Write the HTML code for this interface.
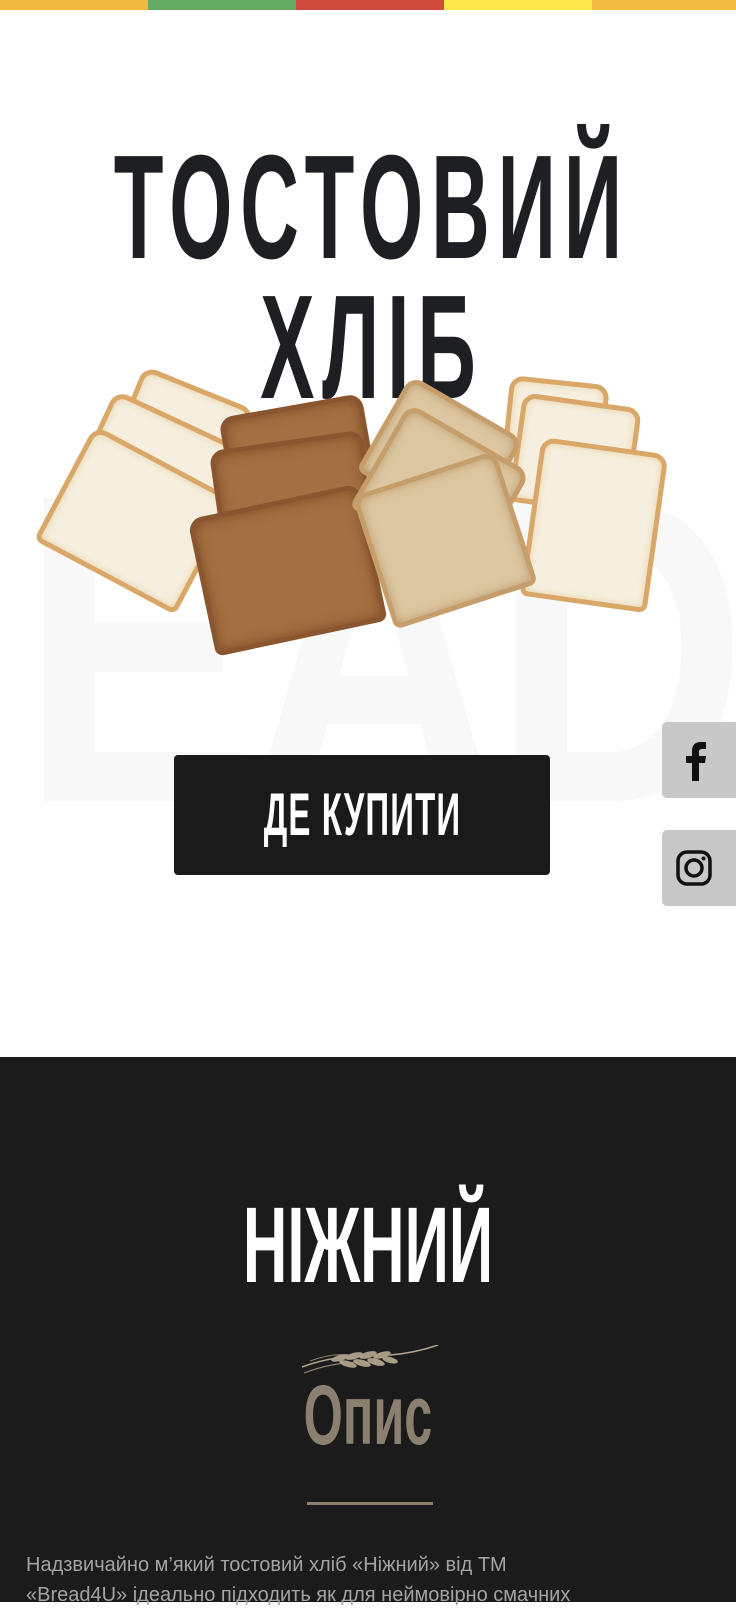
<!DOCTYPE html>
<html><head><meta charset="utf-8"><style>
*{margin:0;padding:0;box-sizing:border-box}
body{width:736px;height:1602px;overflow:hidden;background:#fff;font-family:"Liberation Sans",sans-serif;position:relative}
.bar{position:absolute;top:0;height:10px}
.t{position:absolute;left:0;width:736px;font-weight:bold;color:#1d1f22;white-space:nowrap}
.t span{position:absolute;left:50%;top:0}
.s{position:absolute;border-radius:14px 14px 8px 8px}
.w{background:#f6efdf;border:5px solid #d9a767;box-shadow:inset 0 0 8px #e8d2a8}
.b{background:#a46f42;border:5px solid #8a5630;box-shadow:inset 0 0 12px #7d4c27}
.l{background:#dcc7a2;border:5px solid #c69e6c;box-shadow:inset 0 0 10px #bf9b6c}
.soc{position:absolute;left:662px;width:80px;height:76px;background:#c8c8c8;border-radius:5px}
</style></head><body>
<div class="bar" style="left:0;width:148px;background:#f2b942"></div>
<div class="bar" style="left:148px;width:148px;background:#64aa63"></div>
<div class="bar" style="left:296px;width:148px;background:#d04b3e"></div>
<div class="bar" style="left:444px;width:148px;background:#fde84c"></div>
<div class="bar" style="left:592px;width:144px;background:#f1bb41"></div>
<div style="position:absolute;left:20px;top:430px;font:bold 440px/1 'Liberation Sans',sans-serif;color:#f8f8f8;letter-spacing:-10px;transform:scaleX(0.8);transform-origin:left">EAD</div>
<div class="t" style="top:128px;font-size:148px;line-height:160px"><span style="transform:translateX(-50%) scaleX(0.55);letter-spacing:14px;padding-left:14px">ТОСТОВИЙ</span></div>
<div class="t" style="top:268px;font-size:148px;line-height:160px"><span style="transform:translateX(-50%) scaleX(0.55);letter-spacing:14px;padding-left:14px">ХЛІБ</span></div>
<!-- bread -->
<div class="s w" style="left:125px;top:385px;width:120px;height:80px;transform:rotate(22deg)"></div>
<div class="s w" style="left:90px;top:415px;width:140px;height:90px;transform:rotate(25deg)"></div>
<div class="s w" style="left:55px;top:455px;width:160px;height:130px;transform:rotate(28deg)"></div>
<div class="s w" style="left:505px;top:380px;width:100px;height:100px;transform:rotate(6deg)"></div>
<div class="s w" style="left:515px;top:400px;width:120px;height:110px;transform:rotate(8deg)"></div>
<div class="s w" style="left:530px;top:445px;width:128px;height:160px;transform:rotate(8deg)"></div>
<div class="s b" style="left:225px;top:405px;width:145px;height:90px;transform:rotate(-10deg)"></div>
<div class="s b" style="left:215px;top:440px;width:155px;height:100px;transform:rotate(-8deg)"></div>
<div class="s b" style="left:200px;top:500px;width:175px;height:140px;transform:rotate(-12deg)"></div>
<div class="s l" style="left:375px;top:400px;width:130px;height:110px;transform:rotate(30deg)"></div>
<div class="s l" style="left:370px;top:430px;width:140px;height:120px;transform:rotate(30deg)"></div>
<div class="s l" style="left:370px;top:470px;width:150px;height:140px;transform:rotate(-18deg)"></div>
<div style="position:absolute;left:174px;top:755px;width:376px;height:120px;background:#1a1a1a;border-radius:4px;color:#fff;text-align:center;font-weight:bold;font-size:60px;line-height:120px;white-space:nowrap"><span style="display:inline-block;transform:scaleX(0.55);letter-spacing:2px">ДЕ КУПИТИ</span></div>
<div class="soc" style="top:722px"><svg width="76" height="76" viewBox="0 0 76 76" style="position:absolute;left:-6px"><path d="M36 59V41h-6v-7h6v-5c0-6 3-9 9-9h5v7h-4c-2 0-3 1-3 3v4h7l-1 7h-6v18z" fill="#111"/></svg></div>
<div class="soc" style="top:830px"><svg width="76" height="76" viewBox="0 0 76 76" style="position:absolute;left:-6px"><rect x="22" y="22" width="32" height="32" rx="9" fill="none" stroke="#111" stroke-width="3.5"/><circle cx="38" cy="38" r="8" fill="none" stroke="#111" stroke-width="3.5"/><circle cx="47.5" cy="28.5" r="2" fill="#111"/></svg></div>
<div style="position:absolute;left:0;top:1057px;width:736px;height:545px;background:#1b1b1b"></div>
<div class="t" style="top:1190px;font-size:108px;line-height:110px;color:#fff"><span style="transform:translateX(-50%) scaleX(0.57)">НІЖНИЙ</span></div>
<svg style="position:absolute;left:300px;top:1345px" width="140" height="30" viewBox="0 0 140 30"><path d="M2 22 Q40 8 90 10 Q115 8 138 0" fill="none" stroke="#b0a48f" stroke-width="1.5"/><path d="M4 28 Q40 14 80 18" fill="none" stroke="#8b8070" stroke-width="1.2"/><path d="M10 16 Q30 8 50 10" fill="none" stroke="#8b8070" stroke-width="1"/><g fill="#a89c86"><ellipse cx="40" cy="13" rx="9" ry="3" transform="rotate(-15 40 13)"/><ellipse cx="54" cy="11" rx="9" ry="3.2" transform="rotate(-15 54 11)"/><ellipse cx="68" cy="10" rx="9" ry="3.2" transform="rotate(-15 68 10)"/><ellipse cx="82" cy="10" rx="9" ry="3" transform="rotate(-15 82 10)"/><ellipse cx="48" cy="19" rx="9" ry="3" transform="rotate(15 48 19)"/><ellipse cx="62" cy="18" rx="9" ry="3.2" transform="rotate(15 62 18)"/><ellipse cx="76" cy="17" rx="9" ry="3.2" transform="rotate(15 76 17)"/><ellipse cx="90" cy="15" rx="8" ry="3" transform="rotate(15 90 15)"/></g></svg>
<div class="t" style="top:1373px;font-size:84px;line-height:84px;color:#8b8070"><span style="transform:translateX(-50%) scaleX(0.6)">Опис</span></div>
<div style="position:absolute;left:307px;top:1502px;width:126px;height:3px;background:#8b8070"></div>
<div style="position:absolute;left:26px;top:1550px;width:720px;font-size:20px;line-height:30px;color:#a3a3a3;white-space:nowrap">Надзвичайно м’який тостовий хліб «Ніжний» від ТМ<br>«Bread4U» ідеально підходить як для неймовірно смачних</div>
</body></html>
